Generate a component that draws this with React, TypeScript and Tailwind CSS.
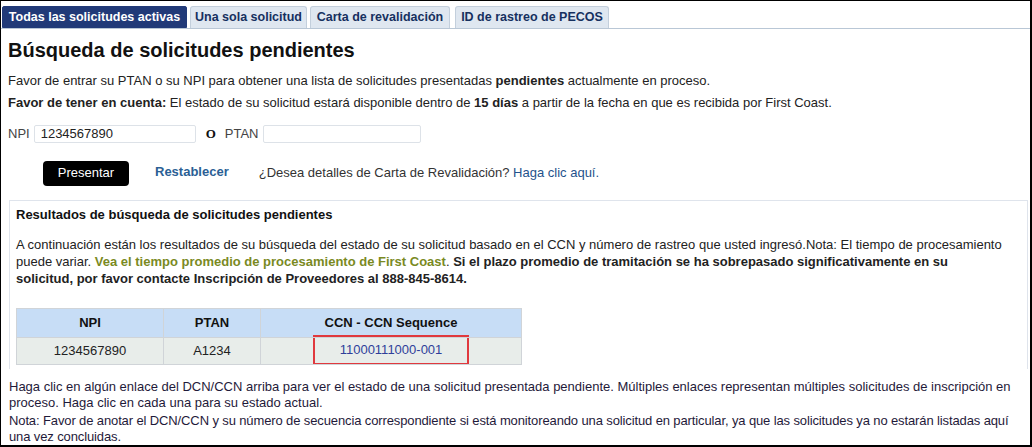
import React from "react";

const font = { fontFamily: '"Liberation Sans", Arial, sans-serif' };

function Tab({ label, active, w }: { label: string; active?: boolean; w: string }) {
  return active ? (
    <div className={`${w} h-[22px] flex items-center justify-center bg-[#213a78] text-white font-bold text-[12.5px] rounded-t-[2px] border border-[#213a78] whitespace-nowrap`}>
      {label}
    </div>
  ) : (
    <div className={`${w} h-[22px] flex items-center justify-center bg-[#dfe7f0] text-[#16305f] font-bold text-[12.5px] rounded-t-[3px] border border-b-0 border-[#c3cfdc] whitespace-nowrap`}>
      {label}
    </div>
  );
}

export default function App() {
  return (
    <div
      style={font}
      className="w-[1032px] h-[447px] bg-white border-t border-l border-b-2 border-r-2 border-black text-[#222] overflow-hidden box-border"
    >
      <div className="flex items-end pl-[1px] pt-[5px] border-b border-[#b9c7d6]">
        <Tab w="w-[185px]" label="Todas las solicitudes activas" active />
        <div className="w-[3px]" />
        <Tab w="w-[117px]" label="Una sola solicitud" />
        <div className="w-[3px]" />
        <Tab w="w-[140px]" label="Carta de revalidación" />
        <div className="w-[5px]" />
        <Tab w="w-[154px]" label="ID de rastreo de PECOS" />
      </div>

      <div className="px-[7px]">
        <h1 className="mt-[9px] text-[20px] leading-[24px] font-semibold text-[#111]">
          Búsqueda de solicitudes pendientes
        </h1>
        <p className="mt-[11px] text-[13px] leading-[16px]">
          Favor de entrar su PTAN o su NPI para obtener una lista de solicitudes presentadas{" "}
          <b>pendientes</b> actualmente en proceso.
        </p>
        <p className="mt-[6px] text-[13px] leading-[16px]">
          <b>Favor de tener en cuenta:</b> El estado de su solicitud estará disponible dentro de{" "}
          <b>15 días</b> a partir de la fecha en que es recibida por First Coast.
        </p>

        <div className="mt-[13px] flex items-center text-[13px] text-[#444]">
          <span>NPI</span>
          <div className="ml-[4px] w-[162px] h-[18px] border border-[#dde2e8] rounded-[2px] px-[6px] flex items-center text-[#222]">
            1234567890
          </div>
          <span className="ml-[10px] font-bold text-[#111]" style={{ fontFamily: '"Liberation Serif", serif' }}>
            O
          </span>
          <span className="ml-[9px]">PTAN</span>
          <div className="ml-[4px] w-[158px] h-[18px] border border-[#dde2e8] rounded-[2px]" />
        </div>

        <div className="mt-[17px] flex items-center text-[13px]">
          <button className="ml-[35px] w-[86px] h-[25px] bg-black text-white rounded-[4px] text-[13px]">
            Presentar
          </button>
          <span className="ml-[26px] font-bold text-[#2b5f95] -mt-[2px]">Restablecer</span>
          <span className="ml-[30px] text-[#333]">
            ¿Desea detalles de Carta de Revalidación? <span className="text-[#24528c]">Haga clic aquí.</span>
          </span>
        </div>
      </div>

      <div className="ml-[8px] mr-[2px] mt-[14px] border border-b-0 border-[#dfe4ec] px-[6px] pb-[4px]">
        <div className="mt-[6px] text-[13px] font-bold leading-[16px] text-[#111]">
          Resultados de búsqueda de solicitudes pendientes
        </div>
        <p className="mt-[13px] text-[13px] leading-[17px]">
          A continuación están los resultados de su búsqueda del estado de su solicitud basado en el CCN y número
          de rastreo que usted ingresó.Nota: El tiempo de procesamiento puede variar.{" "}
          <b className="text-[#7a8a1f]">Vea el tiempo promedio de procesamiento de First Coast</b>.{" "}
          <b>
            Si el plazo promedio de tramitación se ha sobrepasado significativamente en su
            <br />
            solicitud, por favor contacte Inscripción de Proveedores al 888-845-8614.
          </b>
        </p>

        <table className="mt-[21px] w-[506px] border-collapse text-[13px]">
          <thead>
            <tr className="bg-[#c7ddf6] h-[29px]">
              <th className="w-[147px] border border-[#d0d4d8] font-bold text-[#111]">NPI</th>
              <th className="w-[97px] border border-[#d0d4d8] font-bold text-[#111]">PTAN</th>
              <th className="border border-[#d0d4d8] font-bold text-[#111]">CCN - CCN Sequence</th>
            </tr>
          </thead>
          <tbody>
            <tr className="bg-[#e8edea] h-[26px]">
              <td className="border border-[#d0d4d8] text-center text-[#222]">1234567890</td>
              <td className="border border-[#d0d4d8] text-center text-[#222]">A1234</td>
              <td className="border border-[#d0d4d8] text-center p-0">
                <div className="mx-auto w-[156px] h-[30px] -mt-[3px] -mb-[1px] border-2 border-[#e0393e] flex items-center justify-center text-[#2f3f9a]">
                  11000111000-001
                </div>
              </td>
            </tr>
          </tbody>
        </table>
      </div>

      <div className="px-[8px] mt-[10px] text-[13px] leading-[16.5px] text-[#1f1a3a]">
        <p>
          Haga clic en algún enlace del DCN/CCN arriba para ver el estado de una solicitud presentada pendiente.
          Múltiples enlaces representan múltiples solicitudes de inscripción en
          <br />
          proceso. Haga clic en cada una para su estado actual.
        </p>
        <p className="mt-[1px] whitespace-nowrap tracking-[-0.12px]">
          Nota: Favor de anotar el DCN/CCN y su número de secuencia correspondiente si está monitoreando una
          solicitud en particular, ya que las solicitudes ya no estarán listadas aquí
          <br />
          una vez concluidas.
        </p>
      </div>
    </div>
  );
}
